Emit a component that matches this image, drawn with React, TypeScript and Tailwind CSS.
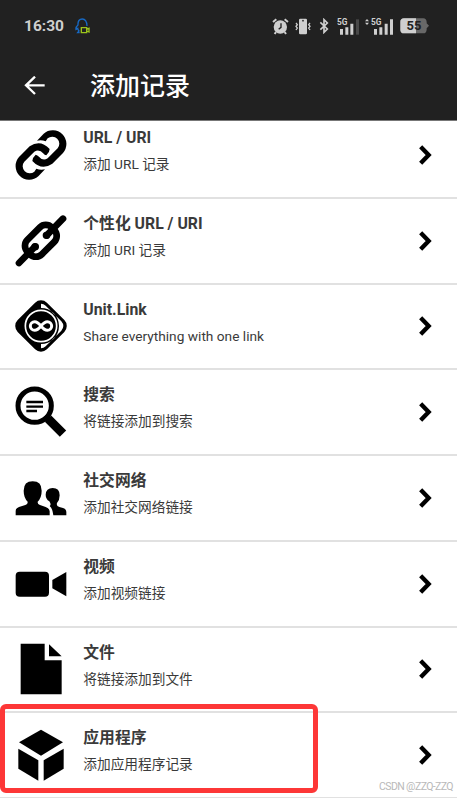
import type { ReactNode } from 'react';

interface RecordItem {
  title: string;
  subtitle: string;
  icon: ReactNode;
}

/* One half of the link, the other half is the same shape turned by 180 degrees */
const LINK_HALF =
  'M64 119Q76 124 90 121L70 142A41.1 41.1 0 0 1 12 84L44 52Q76 30 104 60Q104 70 94 79Q88 77 86 74Q72 58 58 68L28 98A21.3 21.3 0 0 0 58 128Z';

/* Row icons share one 156 x 156 grid */
const LinkIcon = () => (
  <g fill="currentColor">
    <path d={LINK_HALF} />
    <path d={LINK_HALF} transform="rotate(180 78 78)" />
  </g>
);

const ChainIcon = () => (
  <g fill="none" stroke="currentColor" strokeLinecap="round">
    <rect x="26" y="47" width="103" height="61" rx="25" strokeWidth="20" transform="rotate(-45 77.5 77.5)" />
    <path d="M12 144L60 95M95 61L144 11" strokeWidth="20" />
    <path d="M60 95H61M94 61H95" strokeWidth="22" />
  </g>
);

const UnitLinkIcon = () => (
  <g>
    <rect x="16" y="16" width="124" height="124" rx="25" transform="rotate(45 78 78)" fill="currentColor" />
    <path d="M78 11Q86 11 92 17L139 64Q151 78 139 92L92 139Q86 145 78 145V132A54 54 0 0 0 78 24Z" fill="white" />
    <circle cx="78" cy="78" r="51" fill="currentColor" />
    <circle cx="78" cy="78" r="47" fill="currentColor" stroke="white" strokeWidth="5" />
    <path
      d="M78 78C70 68 66 65 59 65A13 13 0 0 0 59 91C66 91 70 88 78 78C86 68 90 65 97 65A13 13 0 0 1 97 91C90 91 86 88 78 78Z"
      fill="none"
      stroke="white"
      strokeWidth="9"
    />
  </g>
);

const SearchIcon = () => (
  <g fill="none" stroke="currentColor">
    <circle cx="59" cy="59" r="50" strokeWidth="15" />
    <path d="M34 48H84M34 62H84M34 75H66" strokeWidth="7" />
    <path d="M90 90L103 103" strokeWidth="16" />
    <path d="M99 98L144 143" strokeWidth="27" />
  </g>
);

const PeopleIcon = () => (
  <g fill="currentColor">
    <path d="M2 130V117Q2 108 12 105L31 99Q39 97 38 89Q26 77 26 56Q26 28 53 28Q80 28 80 56Q80 77 68 89Q67 97 75 99L92 105Q103 108 104 118V130Z" />
    <path d="M115 130L113 119Q111 109 104 102Q110 98 103 88Q92 81 92 68Q93 48 113 48Q134 48 134 70Q134 84 126 93Q123 102 133 105L144 108Q154 111 154 120V130Z" />
  </g>
);

const VideoIcon = () => (
  <g fill="currentColor">
    <rect x="2" y="41" width="100" height="75" rx="12" />
    <path d="M112 66L154 42V115L112 91Z" />
  </g>
);

const FileIcon = () => (
  <g fill="currentColor">
    <path d="M17 2H89V52H140V154H17Z" />
    <path d="M102 4L140 40H102Z" />
  </g>
);

const CubeIcon = () => (
  <g fill="currentColor">
    <path d="M78 2L144 40L78 80L12 40Z" />
    <path d="M10 59L70 94V155L10 119Z" />
    <path d="M146 59V119L86 155V94Z" />
  </g>
);

const records: RecordItem[] = [
  { title: 'URL / URI', subtitle: '添加 URL 记录', icon: <LinkIcon /> },
  { title: '个性化 URL / URI', subtitle: '添加 URI 记录', icon: <ChainIcon /> },
  { title: 'Unit.Link', subtitle: 'Share everything with one link', icon: <UnitLinkIcon /> },
  { title: '搜索', subtitle: '将链接添加到搜索', icon: <SearchIcon /> },
  { title: '社交网络', subtitle: '添加社交网络链接', icon: <PeopleIcon /> },
  { title: '视频', subtitle: '添加视频链接', icon: <VideoIcon /> },
  { title: '文件', subtitle: '将链接添加到文件', icon: <FileIcon /> },
  { title: '应用程序', subtitle: '添加应用程序记录', icon: <CubeIcon /> },
];

function StatusBar() {
  return (
    <div className="flex h-[52px] items-center pl-6 pr-[28px] text-[#cfcfcf]">
      <span className="w-[51px] pt-[2px] text-[15.5px] font-bold leading-none">16:30</span>
      <svg className="h-[16px] w-[15px]" viewBox="0 0 45 48" fill="none" strokeWidth="4">
        <path d="M14 44H8L12 39Q8 34 8 31L3 34Q2 27 9 21Q8 3 22 3Q35 3 36 24" stroke="#1769c4" />
        <path d="M19 29H35V44H19ZM35 34L42 31V42L35 39" stroke="#9bc31c" />
      </svg>

      <div className="ml-auto flex items-center">
        {/* Alarm */}
        <svg className="mr-[6px] h-[17px] w-[17px]" viewBox="0 0 51 51">
          <circle cx="25" cy="27" r="20" fill="currentColor" />
          <path d="M3 12L13 4M38 4L48 12M12 42L8 48M38 42L42 48" stroke="currentColor" strokeWidth="6" />
          <path d="M27 16V28L20 34" fill="none" stroke="#212121" strokeWidth="4" />
        </svg>
        {/* Vibrate */}
        <svg className="mr-[8px] h-[17px] w-[16px]" viewBox="0 0 48 51">
          <rect x="12" y="2" width="24" height="47" rx="4" fill="currentColor" />
          <circle cx="24" cy="8" r="2.5" fill="#212121" />
          <path d="M3 15L7 20L3 25L7 30L3 36M45 15L41 20L45 25L41 30L45 36" fill="none" stroke="currentColor" strokeWidth="4" />
        </svg>
        {/* Bluetooth */}
        <svg className="mr-[8px] h-[16px] w-[10px]" viewBox="0 0 30 48" fill="none" stroke="currentColor" strokeWidth="5">
          <path d="M4 13L25 33L15 43V5L25 15L4 35" />
        </svg>
        {/* Mobile signal, one per SIM */}
        <svg className="mr-[6px] h-[17px] w-[22px]" viewBox="0 0 66 51" fill="currentColor">
          <text x="0" y="20" fontSize="25" fontWeight="700">5G</text>
          <path d="M9 33h9v17h-9zM25 28h9v22h-9zM40 17h9v33h-9z" />
          <path d="M57 4h9v46h-9z" fill="#484848" />
        </svg>
        <svg className="mr-[7px] h-[17px] w-[28px]" viewBox="0 0 84 51" fill="currentColor">
          <path d="M0 10L6 3L12 10ZM0 14H12L6 21Z" />
          <text x="18" y="20" fontSize="25" fontWeight="700">5G</text>
          <path d="M27 33h9v17h-9zM43 28h9v22h-9zM59 17h9v33h-9zM75 4h9v46h-9z" />
        </svg>
        {/* Battery */}
        <svg className="h-[16px] w-[29px]" viewBox="0 0 87 48">
          <path d="M12 1H70Q79 1 80 12V16L87 23L80 31V35Q79 46 70 46H12Q1 46 1 35V12Q1 1 12 1Z" fill="#686868" />
          <path d="M12 1H48V46H12Q1 46 1 35V12Q1 1 12 1Z" fill="currentColor" />
          <text x="42" y="37" fontSize="39" fontWeight="700" textAnchor="middle" fill="#212121">55</text>
        </svg>
      </div>
    </div>
  );
}

function RecordRow({ title, subtitle, icon }: RecordItem) {
  return (
    <li className="flex h-[85.75px] items-center border-b-2 border-[#e1e1e1] pl-[15.3px] pr-[25.5px]">
      <svg className="h-[52px] w-[52px] shrink-0 text-black" viewBox="0 0 156 156">
        {icon}
      </svg>
      <div className="ml-4 flex-1 pb-[7.5px] text-[#3a3a3a]">
        <div className="h-[26px] text-[15.8px] font-bold leading-[26px]">{title}</div>
        <div className="h-[26px] text-[13.7px] leading-[26px]">{subtitle}</div>
      </div>
      <svg className="h-5 w-[13px] text-black" viewBox="0 0 39 60" fill="none" stroke="currentColor" strokeWidth="13">
        <path d="M5 5L29 30L5 55" />
      </svg>
    </li>
  );
}

function App() {
  return (
    <main className="relative h-[798px] w-full overflow-hidden bg-white font-['Roboto','Noto_Sans_CJK_SC',sans-serif]">
      <header className="relative z-10 h-[121px] border-b border-[#777777] bg-[#212121]">
        <StatusBar />
        <div className="flex h-[68px] items-center pl-6 text-white">
          <svg className="h-5 w-[21px]" viewBox="0 0 63 60" fill="none" stroke="currentColor" strokeWidth="7">
            <path d="M33 2L6 28L33 54M5 28H62" />
          </svg>
          <h1 className="ml-[45px] text-[25px] font-medium leading-none">添加记录</h1>
        </div>
      </header>

      <ul className="-mt-[8px]">
        {records.map((record) => (
          <RecordRow key={record.title} {...record} />
        ))}
      </ul>

      {/* Highlight around the last record */}
      <div className="absolute left-0 top-[704px] h-[89px] w-[318px] rounded-[6px] border-[5px] border-[#fd3737]"></div>
      <span className="absolute right-[4px] top-[780px] text-[10.5px] leading-[14px] tracking-[-0.6px] text-[#b9b9b9]">
        CSDN @ZZQ-ZZQ
      </span>
    </main>
  );
}

export default App;
